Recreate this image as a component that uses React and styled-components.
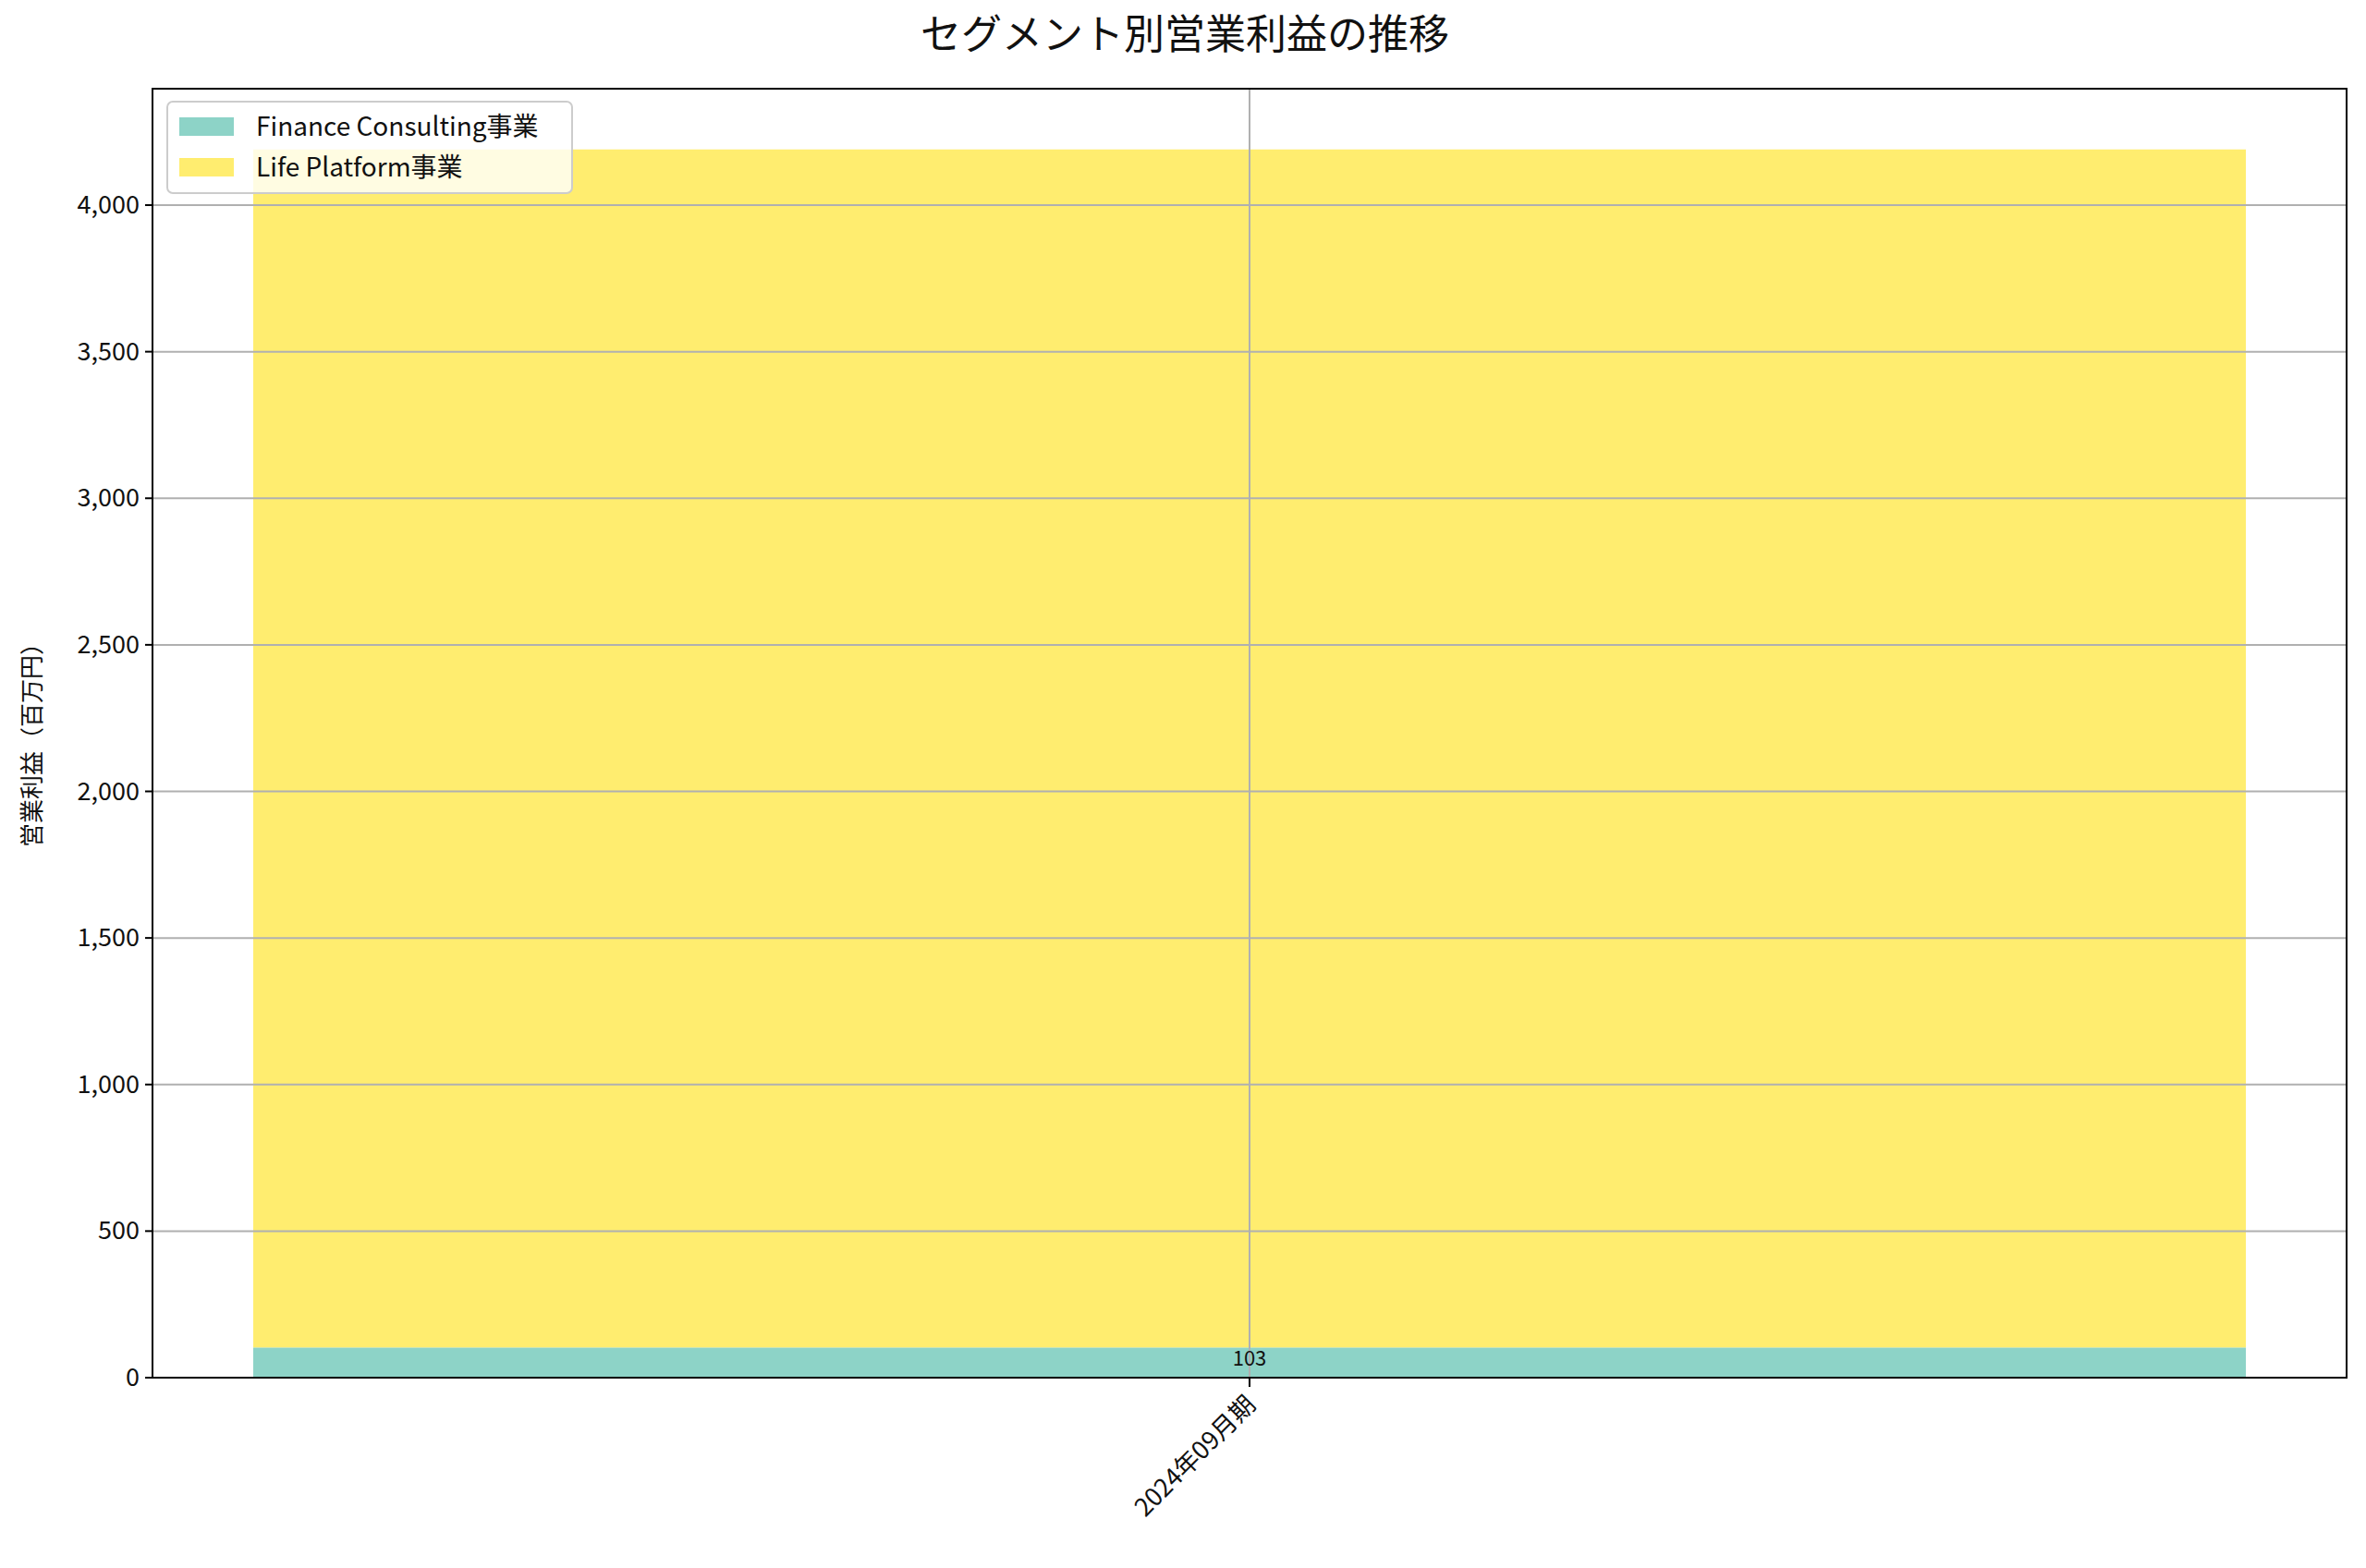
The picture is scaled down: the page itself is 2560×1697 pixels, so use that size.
import React from "react";
import styled, { createGlobalStyle } from "styled-components";

const Global = createGlobalStyle`
  html, body { margin: 0; padding: 0; background: #fff; }
  body { font-family: "Noto Sans CJK JP", "Noto Sans", sans-serif; }
`;

const Figure = styled.div`
  width: 2560px;
  height: 1697px;
  position: relative;
  background: #fff;
`;

const Chart = styled.svg`
  display: block;
  font-family: "Noto Sans CJK JP", "Noto Sans", sans-serif;
`;

const L = 165, R = 2539, T = 96, B = 1491;
const PX = 0.31725;
const y = (v) => B - v * PX;
const cx = 1352;
const finance = 103;
const life = 4087;
const ticks = [0, 500, 1000, 1500, 2000, 2500, 3000, 3500, 4000];

const App = () => (
  <Figure>
    <Global />
    <Chart width="2560" height="1697" viewBox="0 0 2560 1697">
      <text x="1282" y="53" fontSize="44" textAnchor="middle" fill="#111">
        セグメント別営業利益の推移
      </text>
      <rect x="274" y={y(finance)} width="2156" height={finance * PX} fill="#8dd3c7" />
      <rect x="274" y={y(finance + life)} width="2156" height={life * PX} fill="#ffed6f" />
      {ticks.map((t) => (
        <g key={t}>
          <line x1={L} x2={R} y1={y(t)} y2={y(t)} stroke="#b0b0b0" strokeWidth="2" />
          <line x1={L - 8} x2={L} y1={y(t)} y2={y(t)} stroke="#000" strokeWidth="2" />
          <text x={L - 14} y={y(t) + 9} fontSize="27" textAnchor="end" fill="#111">
            {t.toLocaleString("en-US")}
          </text>
        </g>
      ))}
      <line x1={cx} x2={cx} y1={T} y2={B} stroke="#b0b0b0" strokeWidth="2" />
      <line x1={cx} x2={cx} y1={B} y2={B + 10} stroke="#000" strokeWidth="2" />
      <text x={cx} y="1478" fontSize="22" textAnchor="middle" fill="#111">103</text>
      <rect x={L} y={T} width={R - L} height={B - T} fill="none" stroke="#000" strokeWidth="2" />
      <text
        transform={`translate(${cx + 8},1522) rotate(-45)`}
        fontSize="27"
        textAnchor="end"
        fill="#111"
      >
        2024年09月期
      </text>
      <text transform="translate(44,800) rotate(-90)" fontSize="26" textAnchor="middle" fill="#111">
        営業利益（百万円）
      </text>
      <rect x="181" y="110" width="438" height="99" rx="6" fill="#fff" fillOpacity="0.8" stroke="#ccc" strokeWidth="2" />
      <rect x="194" y="127" width="59" height="20" fill="#8dd3c7" />
      <rect x="194" y="171" width="59" height="20" fill="#ffed6f" />
      <text x="277" y="147" fontSize="28" fill="#111">Finance Consulting事業</text>
      <text x="277" y="191" fontSize="28" fill="#111">Life Platform事業</text>
    </Chart>
  </Figure>
);

export default App;
